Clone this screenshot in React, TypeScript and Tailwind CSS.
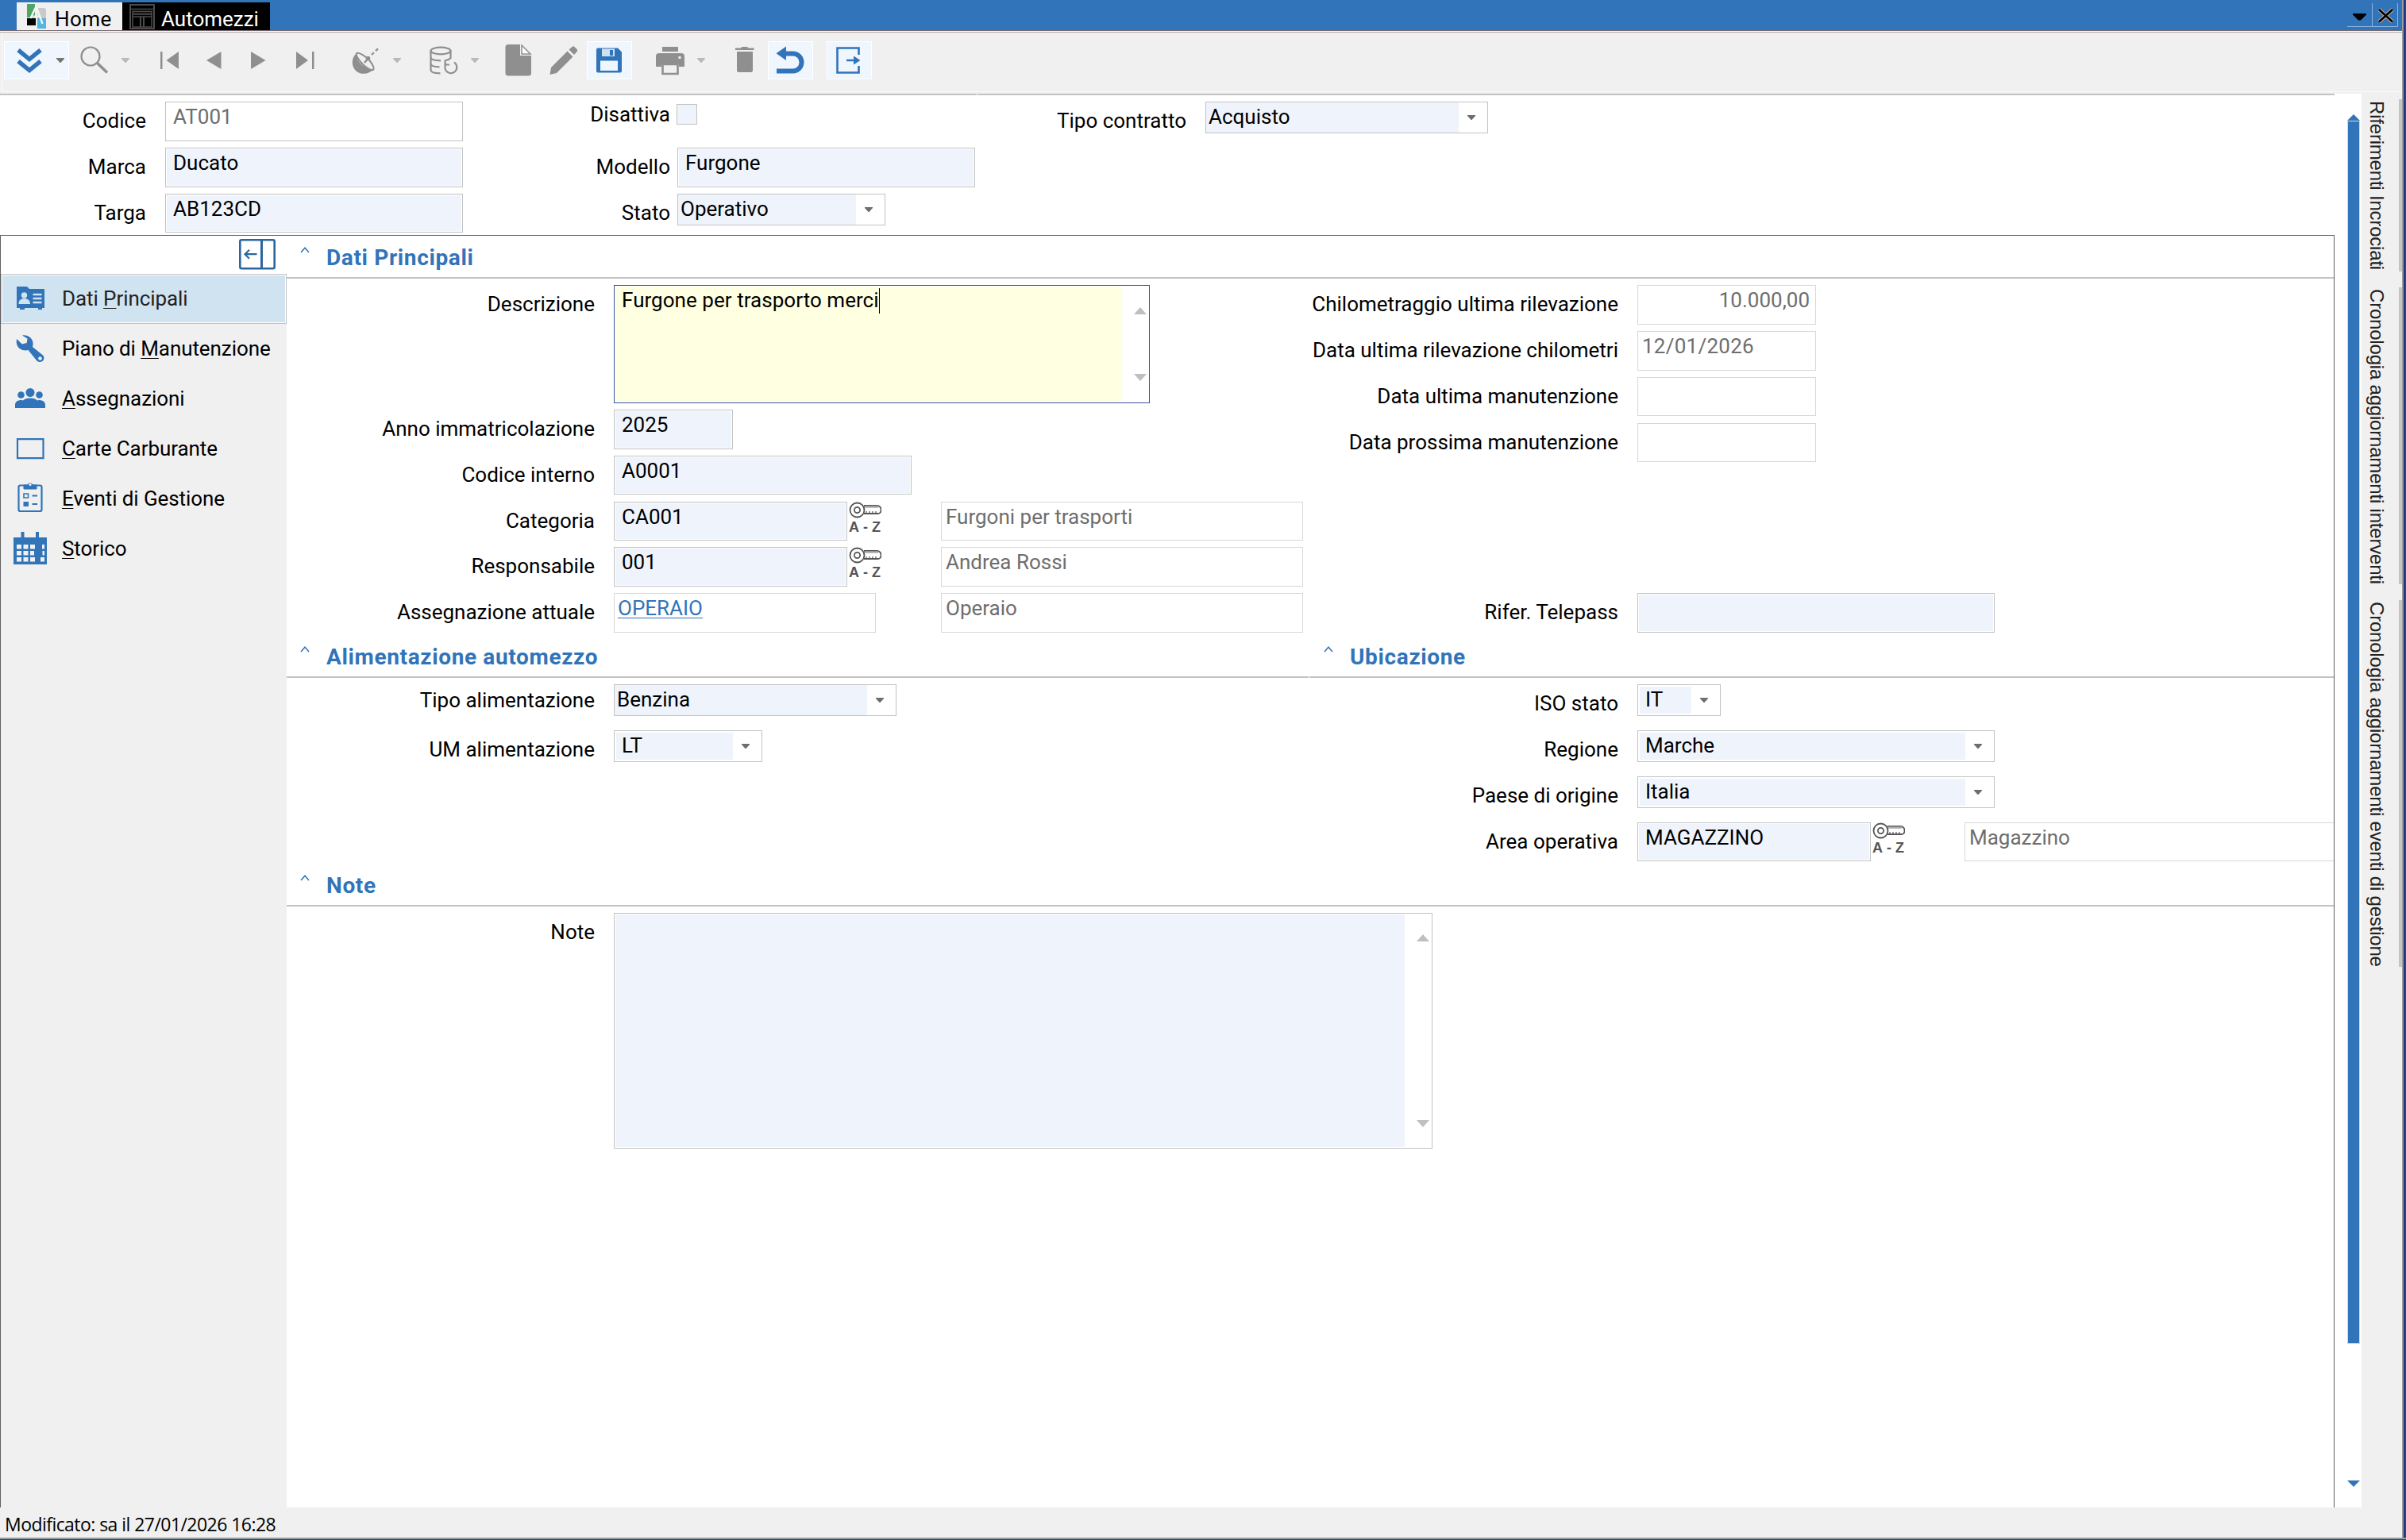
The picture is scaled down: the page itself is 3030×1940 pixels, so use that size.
import React from "react";
import type { ReactNode } from "react";

type Kids = { children?: ReactNode };

/* ---------- small pieces ---------- */

function Label({ children, className = "" }: Kids & { className?: string }) {
  return <div className={`shrink-0 text-right leading-[30px] whitespace-nowrap ${className}`}>{children}</div>;
}

function Field({
  children,
  className = "",
  tone = "edit",
}: Kids & { className?: string; tone?: "edit" | "locked" | "plain" }) {
  const border = tone === "plain" ? "border-[#d8d8d8]" : "border-[#c2c2c2]";
  const fill = tone === "edit" ? "bg-[#eff4fc]" : "bg-white text-[#6e6e6e]";
  return (
    <div className={`shrink-0 border bg-white p-px ${border} ${className}`}>
      <div className={`h-full w-full pt-[2px] leading-[30px] whitespace-nowrap ${fill}`}>{children}</div>
    </div>
  );
}

function Caret({ className = "" }: { className?: string }) {
  return (
    <svg className={className} width="10" height="6" viewBox="0 0 10 6">
      <path d="M0 0h10v1L5.5 6h-1L0 1z" fill="currentColor" />
    </svg>
  );
}

function Select({
  children,
  className = "",
  inset = false,
}: Kids & { className?: string; inset?: boolean }) {
  return (
    <div className={`flex h-10 shrink-0 border border-[#c2c2c2] bg-white ${inset ? "p-[2px]" : ""} ${className}`}>
      <div
        className={`flex-1 bg-[#eff4fc] leading-[30px] whitespace-nowrap ${inset ? "pt-px pl-[7px]" : "pt-[3px] pl-[3px]"}`}
      >
        {children}
      </div>
      <div className={`shrink-0 text-[#6e6e6e] ${inset ? "w-[34px] pt-[14px]" : "w-9 pt-4"}`}>
        <Caret className="ml-[11px]" />
      </div>
    </div>
  );
}

function KeyLookup() {
  return (
    <div className="ml-[2px] h-[41px] w-[41px] shrink-0 text-[#555]">
      <svg className="block" width="41" height="22" viewBox="0 0 41 22" fill="none" stroke="#555" strokeWidth="1.8">
        <circle cx="10.5" cy="10.5" r="9" />
        <circle cx="10.5" cy="10.5" r="3.6" />
        <path d="M19 5h16.500a5 5 0 0 1 5 5v1a4 4 0 0 1-4 4H19" />
        <path d="M20 6.500h17" stroke="#aaa" strokeWidth="2.500" />
        <path d="M22 14v-2M26 14v-2M30 14v-2M34 14v-2" strokeWidth="1.200" />
      </svg>
      <div className="flex justify-between pr-px font-['Liberation_Sans',sans-serif] text-[18px] leading-[20px] font-bold">
        <span>A</span>
        <span>-</span>
        <span>Z</span>
      </div>
    </div>
  );
}

function SectionTitle({ children, className = "" }: Kids & { className?: string }) {
  return (
    <div className={`flex h-[54px] shrink-0 border-b-2 border-[#c3c3c3] ${className}`}>
      <svg className="mt-[14px] ml-[17px] block shrink-0" width="12" height="8" viewBox="0 0 12 8">
        <path d="M1 7 6 1.200 11 7" fill="none" stroke="#3174b9" strokeWidth="1.500" />
      </svg>
      <h2 className="mt-3 ml-[21px] text-[28px] leading-[32px] font-bold tracking-[0.64px] whitespace-nowrap text-[#3174b9]">
        {children}
      </h2>
    </div>
  );
}

function Scroller({ className = "" }: { className?: string }) {
  return (
    <div className={`flex shrink-0 flex-col justify-between text-[#bfbfbf] ${className}`}>
      <svg width="16" height="9" viewBox="0 0 16 9">
        <path d="M8 0 16 9H0z" fill="currentColor" />
      </svg>
      <svg width="16" height="9" viewBox="0 0 16 9">
        <path d="M0 0h16L8 9z" fill="currentColor" />
      </svg>
    </div>
  );
}

/* ---------- toolbar ---------- */

function Tool({ x, w, on = false, children }: Kids & { x: number; w: number; on?: boolean }) {
  return (
    <svg
      className={`block shrink-0 ${on ? "bg-[#eff6fd] outline-1 -outline-offset-1 outline-white" : ""}`}
      width={w}
      height="48"
      viewBox={`${x} 52 ${w} 48`}
      fill="#8f8f8f"
    >
      {children}
    </svg>
  );
}

const smallArrow = (x: number, color = "#b9b9b9") => <path d={`M${x} 73h10v1l-4.500 5h-1l-4.500-5z`} fill={color} />;

function Toolbar() {
  return (
    <div className="flex h-[77px] shrink-0 bg-[#f0f0f0] pt-[2px] pl-[2px]">
      <div className="flex h-[73px] flex-1 border-b border-l border-[#fafafa] pt-[9px] pl-[2px]">
        <Tool x={5} w={82} on>
          <path d="M23 63l14 11.500L51 63M23 77l14 11.500L51 77" fill="none" stroke="#3174b9" strokeWidth="5.500" />
          {smallArrow(71, "#757575")}
        </Tool>
        <Tool x={87} w={103}>
          <circle cx="114" cy="71" r="11.500" fill="none" stroke="#8f8f8f" strokeWidth="2.200" />
          <path d="M122 79l13 12.500" stroke="#8f8f8f" strokeWidth="3.500" />
          {smallArrow(153)}
        </Tool>
        <Tool x={190} w={50}>
          <path d="M202 65h2.500v22H202zM225 65v22l-15.500-11z" />
        </Tool>
        <Tool x={240} w={60}>
          <path d="M278.500 65v22L260 76z" />
        </Tool>
        <Tool x={300} w={55}>
          <path d="M316 65v22l18.500-11z" />
        </Tool>
        <Tool x={355} w={65}>
          <path d="M373 65v22l15-11zM393 65h2.500v22H393z" />
        </Tool>
        <Tool x={420} w={100}>
          <path d="M449 67C442 73 442 84 449 90c7 5 17 3 21-3C462 88 449 80 449 67z" />
          <path
            d="M449 67c4-1 12 4 17 10s5 10 4 11c-3 1-10-3-15-9s-7-10-6-12z"
            fill="none"
            stroke="#8f8f8f"
            strokeWidth="2"
          />
          <path d="M459 79l5-6" stroke="#8f8f8f" strokeWidth="2.500" />
          <circle cx="463.500" cy="73.500" r="2.800" />
          <path d="M468 69l10-9.500" stroke="#8f8f8f" strokeWidth="2.400" strokeDasharray="4 3" />
          {smallArrow(495)}
        </Tool>
        <Tool x={520} w={100}>
          <g fill="none" stroke="#8f8f8f" strokeWidth="2.200">
            <ellipse cx="555" cy="64" rx="12.500" ry="4.300" />
            <path d="M542.500 64v24c0 3 6 4.300 12 4.300M567.500 64v10M542.500 72c0 3 6 4.300 12.500 4.300M567.500 72c0 2-3 3.500-7 4M542.500 80c0 3 5 4.300 11 4.300" />
            <path d="M572 78.500a7.500 7.500 0 1 1-10 1.500M560.500 76v5.500h5.500" />
          </g>
          {smallArrow(593)}
        </Tool>
        <Tool x={620} w={60}>
          <path d="M640 56h15v14h14v22a3.500 3.500 0 0 1-3.500 3.500h-25.500A3.500 3.500 0 0 1 636.500 92V59.500A3.500 3.500 0 0 1 640 56z" />
          <path d="M657 57l11 11h-11z" fill="#fff" stroke="#8f8f8f" strokeWidth="1.500" />
        </Tool>
        <Tool x={680} w={59}>
          <path d="M692.500 94l1.500-9 20.500-20.500 7 7L701 92zM716.500 62.500l4-3.500c1-1 2-1 3 0l3 3c1 1 1 2 0 3l-3.500 4z" />
        </Tool>
        <Tool x={739} w={57} on>
          <path fillRule="evenodd" fill="#3174b9" d="M753 60.500h25l5 5v24a2 2 0 0 1-2 2h-28a2 2 0 0 1-2-2v-27a2 2 0 0 1 2-2z" />
          <path d="M758 61.500h16v9.500h-16z" fill="#cfe0f1" />
          <path d="M768 63h4v7h-4z" fill="#3174b9" />
          <path d="M756 76.500h22V89h-22z" fill="#eff6fd" />
        </Tool>
        <Tool x={796} w={114}>
          <path d="M834 59h20v6h-20zM830 67h28a4 4 0 0 1 4 4v13h-7v-4h-22v4h-7V71a4 4 0 0 1 4-4z" />
          <path d="M834.500 81h19v12h-19z" fill="#f0f0f0" stroke="#8f8f8f" strokeWidth="2.600" />
          <path d="M854.500 71h3v3h-3z" fill="#f0f0f0" />
          {smallArrow(878)}
        </Tool>
        <Tool x={910} w={57}>
          <path d="M926 60.500h7l1.500-1.500h6.500l1.500 1.500h7V63h-23.500zM928 65h20v23.500a2.500 2.500 0 0 1-2.500 2.500h-15a2.500 2.500 0 0 1-2.500-2.500z" />
        </Tool>
        <Tool x={967} w={57} on>
          <path d="M984 67.500h14.500a11 11 0 0 1 0 22H978" fill="none" stroke="#3174b9" strokeWidth="6" />
          <path d="M990 58.500v17.500l-12.500-8.700z" fill="#3174b9" />
        </Tool>
        <div className="w-[17px] shrink-0" />
        <Tool x={1041} w={57} on>
          <path d="M1081.500 69v-8.500h-27v31h27V83" fill="none" stroke="#3174b9" strokeWidth="2.600" />
          <path d="M1066 74.700h9v-4.200l8.500 5.500-8.500 5.500v-4.200h-9z" fill="#3174b9" />
        </Tool>
      </div>
    </div>
  );
}

/* ---------- title bar ---------- */

function TitleBar() {
  return (
    <div className="flex h-[41px] shrink-0 flex-col">
      <div className="flex h-[38px] bg-[#3174b9] pt-[3px] pl-[21px]">
        <div className="flex w-[133px] bg-[#f0f0f0]">
          <svg className="mt-[2px] ml-[13px] block shrink-0" width="25" height="32" viewBox="0 0 25 32">
            <path d="M0 0h10v17H0z" fill="#4fa568" />
            <path d="M13 5h8a3 3 0 0 1 3 3v10H13z" fill="#c9c9c9" />
            <path d="M0 18h11v9H0z" fill="#000" />
            <path d="M13 18h11v13H13z" fill="#52b4e3" />
            <path d="M4.500 18 11.500 3l3 8 5 14" fill="none" stroke="#f6f6f6" strokeWidth="2.400" />
            <path d="M7 15.500h9" stroke="#f6f6f6" strokeWidth="2" />
          </svg>
          <span className="mt-[6px] ml-[10px] leading-[30px] tracking-[0.4px]">Home</span>
        </div>
        <div className="flex h-9 w-[186px] bg-black text-white">
          <svg className="mt-[2px] ml-[9px] block shrink-0" width="32" height="32" viewBox="0 0 32 32" fill="none" stroke="#4b4b4b">
            <path d="M1 1h30v30H1z" strokeWidth="2" />
            <path d="M2 6.500h28M4 9.500h24v3H4zM4 13h24v16H4zM4 16h24" strokeWidth="1.500" />
            <path d="M14 16v13M18 16v13" strokeWidth="2" />
          </svg>
          <span className="mt-[6px] ml-2 leading-[30px]">Automezzi</span>
        </div>
        <div className="flex-1" />
        <svg className="mr-[5px] block shrink-0" width="64" height="32" viewBox="2956 3 64 32">
          <path d="M2956 33.500h63.500V4M2987.500 4v29.500" fill="none" stroke="#8ab6e2" strokeWidth="1" />
          <path d="M2963 17h17v1.500l-7 7h-3l-7-7z" fill="#000" />
          <path d="M2996 12l17 15.500M3013 12l-17 15.500" stroke="#c9b9a6" strokeWidth="4.500" />
          <path d="M2996 12l17 15.500M3013 12l-17 15.500" stroke="#000" strokeWidth="2.800" />
        </svg>
      </div>
      <div className="h-px bg-[#766b70]" />
      <div className="h-px bg-white" />
      <div className="h-px bg-[#b0a29e]" />
    </div>
  );
}

/* ---------- header form ---------- */

function HeaderForm() {
  return (
    <div className="flex h-[176px] shrink-0 bg-white pt-2">
      <div className="flex w-[583px] flex-col">
        <div className="flex h-[58px] shrink-0">
          <Label className="mt-[9px] w-[184px]">Codice</Label>
          <Field tone="locked" className="ml-6 h-[50px] w-[375px]"><span className="ml-2">AT001</span></Field>
        </div>
        <div className="flex h-[58px] shrink-0">
          <Label className="mt-[9px] w-[184px]">Marca</Label>
          <Field className="ml-6 h-[50px] w-[375px]"><span className="ml-2">Ducato</span></Field>
        </div>
        <div className="flex h-[49px] shrink-0">
          <Label className="mt-[9px] w-[184px]">Targa</Label>
          <Field className="ml-6 h-[49px] w-[375px]"><span className="ml-2">AB123CD</span></Field>
        </div>
      </div>
      <div className="flex w-[645px] flex-col">
        <div className="flex h-[58px] shrink-0">
          <Label className="mt-px w-[261px]">Disattiva</Label>
          <div className="mt-[3px] ml-2 size-[26px] border border-[#c2c2c2] bg-[#eff4fc]" />
        </div>
        <div className="flex h-[58px] shrink-0">
          <Label className="mt-[9px] w-[261px]">Modello</Label>
          <Field className="ml-[9px] h-[50px] w-[375px]"><span className="ml-2">Furgone</span></Field>
        </div>
        <div className="flex h-[49px] shrink-0">
          <Label className="mt-[9px] w-[261px]">Stato</Label>
          <Select className="ml-[9px] w-[262px]">Operativo</Select>
        </div>
      </div>
      <div className="flex items-start">
        <Label className="mt-[9px] w-[266px]">Tipo contratto</Label>
        <Select className="ml-6 w-[356px]">Acquisto</Select>
      </div>
    </div>
  );
}

/* ---------- side navigation ---------- */

const B = "#3174b9";

const navItems: { before?: string; key: string; after: string; icon: ReactNode; y: number }[] = [
  {
    before: "Dati ",
    key: "P",
    after: "rincipali",
    y: 345,
    icon: (
      <g>
        <path fill={B} d="M21 361h13l3 3h19v24h-3v2h-5v-2H31v2h-6v-2h-4z" />
        <circle cx="30.500" cy="372" r="3.700" fill="#d0e3f1" />
        <path d="M23.500 383c0-5 3-7 7-7s7.500 2 7.500 7z" fill="#d0e3f1" />
        <path d="M41.500 371h11M41.500 376h11M41.500 381h11" stroke="#d0e3f1" strokeWidth="2.600" />
      </g>
    ),
  },
  {
    before: "Piano di ",
    key: "M",
    after: "anutenzione",
    y: 408,
    icon: (
      <g>
        <path
          fill={B}
          d="M28 422.500c6-1 11 2 13 7 1 3 .5 5.500 0 7.500l13 10.500c3 3 1 8-3 8.500-2 .2-3.500-.5-5-2L35.500 441c-6 1.500-13-1-14.500-8-.5-2-.3-4 .2-6l6.500 6.500 6-1.500.8-5.500z"
        />
        <circle cx="50.500" cy="451.500" r="2.300" fill="#f0f0f0" />
      </g>
    ),
  },
  {
    key: "A",
    after: "ssegnazioni",
    y: 471,
    icon: (
      <g fill={B}>
        <circle cx="38" cy="494.500" r="5.500" />
        <circle cx="26.500" cy="497.500" r="4.300" />
        <circle cx="49.500" cy="497.500" r="4.300" />
        <path d="M19 514v-4c0-4 3.500-6 8-6l2 .5c2-2 5-3 9-3s7 1 9 3l2-.5c4.500 0 8 2 8 6v4z" />
      </g>
    ),
  },
  {
    key: "C",
    after: "arte Carburante",
    y: 534,
    icon: <path d="M22 553.200h32.500v24H22z" fill="none" stroke={B} strokeWidth="2.200" />,
  },
  {
    key: "E",
    after: "venti di Gestione",
    y: 597,
    icon: (
      <g fill="none" stroke={B} strokeWidth="2.200">
        <rect x="23.500" y="611.500" width="29" height="32.500" rx="2" />
        <path d="M30 611h4.500a4 4 0 0 1 7 0H46v5H30z" fill={B} strokeWidth="1" />
        <circle cx="38" cy="610.500" r="1.600" fill="#f0f0f0" stroke="none" />
        <path d="M30 622h5.500v5H30z" strokeWidth="1.600" />
        <path d="M29.500 632h6.500v6h-6.500z" fill={B} stroke="none" />
        <path d="M40.500 624.500h6.500M40.500 635h6.500" />
      </g>
    ),
  },
  {
    key: "S",
    after: "torico",
    y: 660,
    icon: (
      <g fill={B}>
        <path d="M17 677h42v34H17z" />
        <path d="M26.500 670h4v8h-4zM45 670h4v8h-4z" />
        <path
          fill="#f0f0f0"
          d="M21 686h6v5.500h-6zM29.500 686h6v5.500h-6zM38 686h6v5.500h-6zM21 694h6v5.500h-6zM29.500 694h6v5.500h-6zM38 694h5v5.500h-5zM21 702h6v5.500h-6zM29.500 702h6v5.500h-6zM38 702h6v5.500h-6zM53 686h3v5.500h-3zM53.500 694h2.500v5.500h-2.500zM51 702h5v5.500h-5z"
        />
      </g>
    ),
  },
];

function Nav() {
  return (
    <nav className="flex w-[360px] shrink-0 flex-col bg-[#f0f0f0]">
      <div className="flex h-12 justify-end bg-white pt-1 pr-[14px]">
        <svg width="46" height="39" viewBox="0 0 46 39" fill="none" stroke="#2b669f">
          <rect x="1.300" y="1.300" width="43.400" height="36" rx="2" strokeWidth="2.600" />
          <path d="M28.500 2v35" strokeWidth="3" />
          <path d="M7.500 19.200h15M13 13.700l-5.500 5.500 5.500 5.500" strokeWidth="2.200" />
        </svg>
      </div>
      {navItems.map((it, i) => (
        <a
          key={it.key}
          className={`flex h-[63px] shrink-0 ${i === 0 ? "border border-[#c2c2c2] bg-[#d0e3f1] text-[#222] ring-1 ring-white ring-inset" : ""}`}
        >
          <svg
            className={`block shrink-0 ${i === 0 ? "-mt-px -ml-px" : ""}`}
            width="77"
            height="63"
            viewBox={`1 ${it.y} 77 63`}
          >
            {it.icon}
          </svg>
          <span className={`leading-[30px] tracking-[-0.08px] whitespace-pre ${i === 0 ? "mt-[15px]" : "mt-4"}`}>
            {it.before}
            <span className="underline decoration-1 underline-offset-[3px]">{it.key}</span>
            {it.after}
          </span>
        </a>
      ))}
    </nav>
  );
}

/* ---------- main sections ---------- */

function MainData() {
  return (
    <div className="flex h-[449px] shrink-0 pt-2">
      <div className="flex w-[1288px] flex-col">
        <div className="flex h-[157px]">
          <Label className="mt-[9px] w-[388px]">Descrizione</Label>
          <div className="ml-6 flex h-[149px] w-[675px] shrink-0 border border-[#3b559c] bg-white p-px">
            <div className="flex flex-1 items-start bg-[#ffffe1] pt-[2px] pl-2">
              <span className="leading-[30px] tracking-[0.04px] whitespace-nowrap">Furgone per trasporto merci</span>
              <span className="h-8 w-px bg-black" />
            </div>
            <Scroller className="mr-[2px] mb-[26px] ml-[15px] mt-[26px]" />
          </div>
        </div>
        <div className="flex h-[58px]">
          <Label className="mt-[9px] w-[388px]">Anno immatricolazione</Label>
          <Field className="ml-6 h-[50px] w-[150px]"><span className="ml-2">2025</span></Field>
        </div>
        <div className="flex h-[58px]">
          <Label className="mt-[9px] w-[388px]">Codice interno</Label>
          <Field className="ml-6 h-[49px] w-[375px]"><span className="ml-2">A0001</span></Field>
        </div>
        <div className="flex h-[57px]">
          <Label className="mt-[9px] w-[388px]">Categoria</Label>
          <Field className="ml-6 h-[49px] w-[294px]"><span className="ml-2">CA001</span></Field>
          <KeyLookup />
          <Field tone="plain" className="ml-[75px] h-[49px] w-[456px]"><span className="ml-1">Furgoni per trasporti</span></Field>
        </div>
        <div className="flex h-[58px]">
          <Label className="mt-[9px] w-[388px]">Responsabile</Label>
          <Field className="ml-6 h-[50px] w-[294px]"><span className="ml-2">001</span></Field>
          <KeyLookup />
          <Field tone="plain" className="ml-[75px] h-[50px] w-[456px]"><span className="ml-1">Andrea Rossi</span></Field>
        </div>
        <div className="flex">
          <Label className="mt-[9px] w-[388px]">Assegnazione attuale</Label>
          <Field tone="plain" className="ml-6 h-[50px] w-[330px]">
            <span className="ml-[3px] text-[#3174b9] underline decoration-1 underline-offset-[3px]">OPERAIO</span>
          </Field>
          <Field tone="plain" className="ml-[82px] h-[50px] w-[456px]"><span className="ml-1">Operaio</span></Field>
        </div>
      </div>
      <div className="flex flex-1 flex-col">
        <div className="flex h-[58px]">
          <Label className="mt-[9px] w-[389px]">Chilometraggio ultima rilevazione</Label>
          <Field tone="plain" className="ml-6 h-[50px] w-[225px] text-right"><span className="mr-[6px]">10.000,00</span></Field>
        </div>
        <div className="flex h-[58px]">
          <Label className="mt-[9px] w-[389px]">Data ultima rilevazione chilometri</Label>
          <Field tone="plain" className="ml-6 h-[50px] w-[225px]"><span className="ml-1 tracking-[0.25px]">12/01/2026</span></Field>
        </div>
        <div className="flex h-[58px]">
          <Label className="mt-[9px] w-[389px]">Data ultima manutenzione</Label>
          <Field tone="plain" className="ml-6 h-[49px] w-[225px]" />
        </div>
        <div className="flex h-[214px]">
          <Label className="mt-[9px] w-[389px]">Data prossima manutenzione</Label>
          <Field tone="plain" className="ml-6 h-[49px] w-[225px]" />
        </div>
        <div className="flex">
          <Label className="mt-[9px] w-[389px]">Rifer. Telepass</Label>
          <Field className="ml-6 h-[50px] w-[450px]" />
        </div>
      </div>
    </div>
  );
}

function FuelAndPlace() {
  return (
    <div className="flex h-[288px] shrink-0">
      <div className="flex w-[1288px] flex-col">
        <SectionTitle className="mr-px">Alimentazione automezzo</SectionTitle>
        <div className="mt-2 flex h-[58px]">
          <Label className="mt-[5px] w-[388px]">Tipo alimentazione</Label>
          <Select className="ml-6 w-[356px]">Benzina</Select>
        </div>
        <div className="flex h-[58px]">
          <Label className="mt-[9px] w-[388px]">UM alimentazione</Label>
          <Select inset className="ml-6 w-[187px]">LT</Select>
        </div>
      </div>
      <div className="flex min-w-0 flex-1 flex-col overflow-hidden">
        <SectionTitle className="pl-px">Ubicazione</SectionTitle>
        <div className="mt-2 flex h-[58px]">
          <Label className="mt-[9px] w-[389px]">ISO stato</Label>
          <Select inset className="ml-6 w-[105px]">IT</Select>
        </div>
        <div className="flex h-[58px]">
          <Label className="mt-[9px] w-[389px]">Regione</Label>
          <Select inset className="ml-6 w-[450px]">Marche</Select>
        </div>
        <div className="flex h-[58px]">
          <Label className="mt-[9px] w-[389px]">Paese di origine</Label>
          <Select inset className="ml-6 w-[450px]">Italia</Select>
        </div>
        <div className="flex">
          <Label className="mt-[9px] w-[389px]">Area operativa</Label>
          <Field className="ml-6 h-[49px] w-[294px]"><span className="ml-2">MAGAZZINO</span></Field>
          <KeyLookup />
          <Field tone="plain" className="ml-[75px] h-[49px] w-[480px]"><span className="ml-1">Magazzino</span></Field>
        </div>
      </div>
    </div>
  );
}

function Notes() {
  return (
    <>
      <SectionTitle>Note</SectionTitle>
      <div className="mt-2 flex">
        <Label className="mt-[9px] w-[388px]">Note</Label>
        <div className="ml-6 flex h-[297px] w-[1031px] shrink-0 border border-[#c2c2c2] bg-white p-px">
          <div className="flex-1 bg-[#eff4fc]" />
          <Scroller className="mr-[2px] mb-[25px] ml-[15px] mt-[25px]" />
        </div>
      </div>
    </>
  );
}

/* ---------- right-hand tabs ---------- */

function SideTab({ children, className = "" }: Kids & { className?: string }) {
  return (
    <div className={`flex border-r-4 border-[#c4c4c4] ${className}`}>
      <div className="ml-[4px] pt-[2px] font-['Liberation_Sans',sans-serif] text-[24px] leading-[30px] tracking-[-0.2px] whitespace-nowrap text-[#222] [writing-mode:vertical-rl]">
        {children}
      </div>
    </div>
  );
}

export default function App() {
  return (
    <div className="flex h-[1940px] w-[3030px] flex-col overflow-hidden bg-[#f0f0f0] font-[Roboto,sans-serif] text-[26px] text-black">
      <div className="flex h-[1937px] shrink-0">
        <div className="flex w-[3025px] shrink-0 flex-col">
          <TitleBar />
          <Toolbar />
          <div className="flex h-[1781px] shrink-0">
            <div className="flex w-[2940px] shrink-0 flex-col">
              <div className="flex h-[2px] shrink-0 gap-px bg-white">
                <div className="w-[1230px] bg-[#c3c3c3]" />
                <div className="flex-1 bg-[#c3c3c3]" />
              </div>
              <HeaderForm />
              <div className="flex min-h-0 flex-1 border-t border-r border-l border-[#606060]">
                <Nav />
                <main className="flex min-w-0 flex-1 flex-col bg-white">
                  <SectionTitle>Dati Principali</SectionTitle>
                  <MainData />
                  <FuelAndPlace />
                  <Notes />
                </main>
              </div>
            </div>
            <div className="flex w-[34px] shrink-0 flex-col bg-white pt-[26px] pl-4">
              <svg className="block" width="16" height="8" viewBox="0 0 16 8">
                <path d="M8 0 16 8H0z" fill="#3174b9" />
              </svg>
              <div className="h-[1541px] w-4 border border-[#d8d8d8] bg-[#3174b9]" />
              <svg className="mt-[172px] block" width="16" height="8" viewBox="0 0 16 8">
                <path d="M0 0h16L8 8z" fill="#3174b9" />
              </svg>
            </div>
            <div className="flex flex-1 flex-col bg-[#f0f0f0] pt-[7px]">
              <SideTab className="h-[217px]">Riferimenti Incrociati</SideTab>
              <SideTab className="mt-5 h-[374px]">Cronologia aggiornamenti interventi</SideTab>
              <SideTab className="mt-5 h-[462px]">Cronologia aggiornamenti eventi di gestione</SideTab>
            </div>
          </div>
          <div className="flex flex-1 bg-[#f0f0f0]">
            <span className="mt-[4px] ml-[6px] font-['Open_Sans','Noto_Sans',sans-serif] text-[23px] leading-[34px] tracking-[-0.55px]">
              Modificato: sa il 27/01/2026 16:28
            </span>
          </div>
        </div>
        <div className="w-[2px] bg-[#9c9c9c]" />
        <div className="w-px bg-[#1b2440]" />
        <div className="flex-1 bg-[#1a46b4]" />
      </div>
      <div className="h-[2px] shrink-0 bg-[#969a9c]" />
      <div className="h-px shrink-0 bg-[#1f4a5c]" />
    </div>
  );
}
